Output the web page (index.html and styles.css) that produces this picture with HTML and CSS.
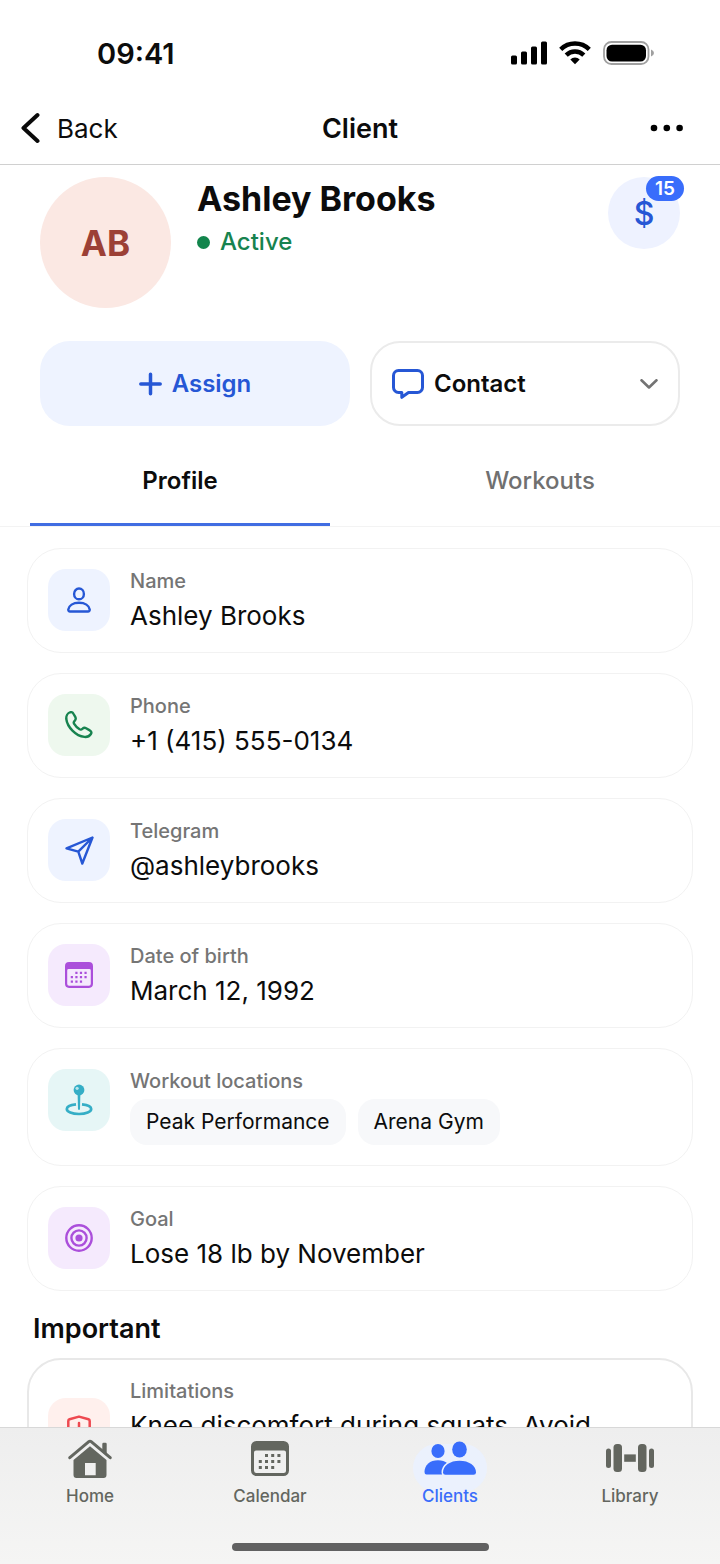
FILE: index.html
```html
<!DOCTYPE html>
<html lang="en">
<head>
    <meta charset="UTF-8">
    <meta name="viewport" content="width=device-width, initial-scale=1.0">
    <title>Client</title>
    <link rel="stylesheet" href="styles.css">
</head>
<body>
<svg class="sprite" aria-hidden="true">
  <symbol id="calendar" viewBox="0 0 38 35">
    <path fill-rule="evenodd" d="M5.5 0h27A5.5 5.5 0 0 1 38 5.500v24a5.500 5.500 0 0 1-5.500 5.500h-27A5.500 5.500 0 0 1 0 29.500v-24A5.500 5.500 0 0 1 5.500 0zM5 9.500a2 2 0 0 0-2 2v18A2.500 2.500 0 0 0 5.500 32h27a2.500 2.500 0 0 0 2.500-2.500v-18a2 2 0 0 0-2-2z"/>
    <path d="M14 13h3v3h-3zM20.200 13h3v3h-3zM26.400 13h3v3h-3zM7.800 19h3v3h-3zM14 19h3v3h-3zM20.200 19h3v3h-3zM26.400 19h3v3h-3zM7.800 25h3v3h-3zM14 25h3v3h-3zM20.200 25h3v3h-3z"/>
  </symbol>
</svg>

<div class="status">
  <span class="time">09:41</span>
  <div class="signals">
    <svg width="36" height="24" viewBox="0 0 36 24"><rect y="14.500" width="6" height="9" rx="1.500"/><rect x="10" y="10.500" width="6" height="13" rx="1.500"/><rect x="20" y="5.500" width="6" height="18" rx="1.500"/><rect x="30" y=".5" width="6" height="23" rx="1.500"/></svg>
    <svg width="32" height="24" viewBox="0 0 32 24" fill="none" stroke="#000" stroke-width="4.400"><path d="M1.700 8.300a20.500 20.500 0 0 1 28.600 0"/><path d="M7.200 14.100a12.500 12.500 0 0 1 17.600 0"/><path d="M11.300 18.400a6.700 6.700 0 0 1 9.400 0L16 23.300z" fill="#000" stroke="none"/></svg>
    <svg width="51" height="24" viewBox="0 0 51 24"><rect x="1" y="1" width="44.500" height="22" rx="7.500" fill="none" stroke="#a0a0a0" stroke-width="1.800"/><rect x="3.500" y="3.700" width="39.500" height="16.800" rx="5.500"/><path d="M48 8.500q3 1.200 3 3.500t-3 3.500z" fill="#a0a0a0"/></svg>
  </div>
</div>

<header class="topbar">
  <a class="back" href="#">
    <svg width="20" height="32" viewBox="0 0 20 32" fill="none" stroke="#0a0a0a" stroke-width="4" stroke-linecap="round" stroke-linejoin="round"><path d="M16.500 3 2.500 16l14 13"/></svg>
    Back
  </a>
  <h1>Client</h1>
  <button class="more" type="button" aria-label="More">
    <svg width="34" height="8" viewBox="0 0 34 8"><circle cx="4" cy="4" r="3.300"/><circle cx="16.800" cy="4" r="3.300"/><circle cx="29.600" cy="4" r="3.300"/></svg>
  </button>
</header>

<main>
  <section class="client">
    <div class="avatar">AB</div>
    <div class="who">
      <h2>Ashley Brooks</h2>
      <p class="state">Active</p>
    </div>
    <button class="money" type="button" aria-label="Payments">$<span class="badge">15</span></button>
  </section>

  <div class="actions">
    <button class="assign" type="button">
      <svg width="23" height="24" viewBox="0 0 23 24" fill="none" stroke="currentColor" stroke-width="3.500" stroke-linecap="round"><path d="M11.500 2.200v19.600M1.800 12h19.400"/></svg>
      Assign
    </button>
    <button class="contact" type="button" aria-haspopup="menu">
      <svg width="32" height="30" viewBox="0 0 32 30" fill="none" stroke="#2657d5" stroke-width="3" stroke-linejoin="round"><path d="M6.500 1.500h19a5 5 0 0 1 5 5v12a5 5 0 0 1-5 5H16.500L9.800 28.300V23.500H6.500a5 5 0 0 1-5-5v-12a5 5 0 0 1 5-5z"/></svg>
      Contact
      <svg class="chevron" width="18" height="10" viewBox="0 0 18 10" fill="none" stroke="#737373" stroke-width="2.600" stroke-linecap="round" stroke-linejoin="round"><path d="M1.500 1.300 9 8.500l7.500-7.200"/></svg>
    </button>
  </div>

  <div class="tabs" role="tablist">
    <button class="tab active" type="button" role="tab" aria-selected="true">Profile</button>
    <button class="tab" type="button" role="tab" aria-selected="false">Workouts</button>
  </div>

  <div class="cards">
    <div class="card">
      <div class="tile blue">
        <svg width="24" height="26" viewBox="0 0 24 26" fill="none" stroke="currentColor" stroke-width="2.400"><ellipse cx="12" cy="6.900" rx="4.900" ry="5.400"/><path d="M1.300 22.500C1.800 18.500 6 15.800 12 15.800s10.200 2.700 10.700 6.700c.1 1.300-.6 2-1.700 2H3c-1.100 0-1.800-.7-1.700-2z"/></svg>
      </div>
      <div class="info"><h3>Name</h3><p>Ashley Brooks</p></div>
    </div>

    <div class="card">
      <div class="tile green">
        <svg width="28" height="28" viewBox="0 0 28 28" fill="none" stroke="currentColor" stroke-width="2.400" stroke-linejoin="round"><path d="M5.500 1.200C7 .9 8 1.800 8.600 3l1.800 3.200c.7 1.400.3 2.400-.6 3.400-1 1-1.500 1.800-.8 3 1.500 2.500 3.200 4.200 5.600 5.700 1.200.7 2 .3 3-.6 1-1 2.200-1.200 3.500-.5l3.700 2.200c1.600 1 2 2.300 1.100 3.600-1.300 2-3.700 3.200-6.500 2.900C10.700 25 2.300 16 1.300 8 1 5 2.500 2 5.500 1.200z"/></svg>
      </div>
      <div class="info"><h3>Phone</h3><p>+1 (415) 555-0134</p></div>
    </div>

    <div class="card">
      <div class="tile blue">
        <svg width="29" height="29" viewBox="0 0 29 29" fill="none" stroke="currentColor" stroke-width="2.400" stroke-linejoin="round"><path d="M27.500 1.500 1.500 12.300 13.300 15.700 17.300 27.500zM13.300 15.700 27.500 1.500"/></svg>
      </div>
      <div class="info"><h3>Telegram</h3><p>@ashleybrooks</p></div>
    </div>

    <div class="card">
      <div class="tile purple">
        <svg width="28" height="26" fill="currentColor"><use href="#calendar"/></svg>
      </div>
      <div class="info"><h3>Date of birth</h3><p>March 12, 1992</p></div>
    </div>

    <div class="card">
      <div class="tile teal">
        <svg width="28" height="32" viewBox="0 0 28 32"><path d="M11 20.300C5 20.900 1.800 22.800 1.800 25c0 2.900 5.200 5 12.200 5s12.200-2.100 12.200-5c0-2.200-3.200-4.100-9.200-4.700" fill="none" stroke="currentColor" stroke-width="2.700"/><path d="M12.600 9h2.800L15 25.200q-1 1.600-2 0z" fill="currentColor"/><circle cx="14" cy="6" r="5.400" fill="currentColor"/><circle cx="12.100" cy="4.300" r="1.600" fill="#b9e6ec"/></svg>
      </div>
      <div class="info">
        <h3>Workout locations</h3>
        <div class="chips"><span class="chip">Peak Performance</span><span class="chip">Arena Gym</span></div>
      </div>
    </div>

    <div class="card">
      <div class="tile purple">
        <svg width="28" height="28" viewBox="0 0 28 28" fill="none" stroke="currentColor" stroke-width="2.400"><circle cx="14" cy="14" r="12.700"/><circle cx="14" cy="14" r="7.600"/><circle cx="14" cy="14" r="3.600" fill="currentColor" stroke="none"/></svg>
      </div>
      <div class="info"><h3>Goal</h3><p>Lose 18 lb by November</p></div>
    </div>

    <h2 class="section-title">Important</h2>

    <div class="card important">
      <div class="tile red">
        <svg width="24" height="28" viewBox="0 0 24 28" fill="none" stroke="currentColor" stroke-width="2.500" stroke-linecap="round" stroke-linejoin="round"><path d="M12 1.600 21.500 4.300q1.200.4 1.200 1.700v8.500c0 6-4.700 9.300-10.700 12C6 23.800 1.300 20.500 1.300 14.500V6q0-1.300 1.200-1.700z"/><path d="M12 8v7M12 19.300v.2"/></svg>
      </div>
      <div class="info"><h3>Limitations</h3><p>Knee discomfort during squats. Avoid</p></div>
    </div>
  </div>
</main>

<nav class="tabbar">
  <div class="links">
    <a href="#">
      <span class="icon"><svg width="44" height="40" viewBox="0 0 44 40"><path d="M34.300 14V6q0-1.200 1.200-1.200h2q1.200 0 1.200 1.200v12z" fill="currentColor"/><path d="M1.800 19.700 20.800 3.700q1.200-1 2.400 0L42.200 19.700" fill="none" stroke="currentColor" stroke-width="3" stroke-linecap="round"/><path fill-rule="evenodd" d="M22 8.200 38.500 22v15a3 3 0 0 1-3 3h-27a3 3 0 0 1-3-3V22zM17 25v12.300h10.700V25z" fill="currentColor"/></svg></span>
      Home
    </a>
    <a href="#">
      <span class="icon"><svg width="38" height="35" fill="currentColor"><use href="#calendar"/></svg></span>
      Calendar
    </a>
    <a class="current" href="#">
      <span class="icon"><svg width="52" height="36" viewBox="0 0 52 36" fill="currentColor"><ellipse cx="14" cy="11" rx="6.600" ry="7"/><path d="M.5 32c0-7 5.500-11.700 13.500-11.700 4 0 7 1 9.500 3V34.500H2.500Q.5 34.500.5 32z"/><ellipse cx="35.500" cy="9.500" rx="7.300" ry="8"/><path d="M19 32.500c0-7 7-11.800 16.500-11.800S52 25.500 52 32.500q0 2.300-2.500 2.300h-28q-2.500 0-2.500-2.300z" stroke="#ebf1fd" stroke-width="3" paint-order="stroke"/></svg></span>
      Clients
    </a>
    <a href="#">
      <span class="icon"><svg width="48" height="28" viewBox="0 0 48 28" fill="currentColor"><rect y="4.500" width="5" height="19.500" rx="2.500"/><rect x="7.500" width="8.500" height="28" rx="3.500"/><rect x="18.200" y="10.400" width="11.600" height="7.400"/><rect x="32" width="8.500" height="28" rx="3.500"/><rect x="43" y="4.500" width="5" height="19.500" rx="2.500"/></svg></span>
      Library
    </a>
  </div>
  <div class="indicator"></div>
</nav>
</body>
</html>
```

FILE: styles.css
```css
* {
  box-sizing: border-box;
}

body {
  margin: 0;
  height: 100vh;
  display: flex;
  flex-direction: column;
  background: #fff;
  color: #0c0c0c;
  font-family: Inter, "Liberation Sans", sans-serif;
}

h1, h2, h3, p {
  margin: 0;
}

a {
  color: inherit;
  text-decoration: none;
}

button {
  border: 0;
  padding: 0;
  background: none;
  color: inherit;
  font-family: inherit;
  cursor: pointer;
}

svg {
  display: block;
  flex: none;
}

.sprite {
  position: absolute;
  width: 0;
  height: 0;
}

/* status bar */
.status {
  display: flex;
  justify-content: space-between;
  align-items: center;
  height: 92px;
  flex: none;
  padding: 14px 66px 0 97px;
}

.time {
  font-size: 29px;
  font-weight: 600;
}

.signals {
  display: flex;
  gap: 12px;
}

/* top bar */
.topbar {
  display: grid;
  grid-template-columns: 1fr auto 1fr;
  align-items: center;
  height: 73px;
  flex: none;
  padding: 0 21px;
  border-bottom: 1px solid #d0d0d0;
}

.back {
  display: flex;
  align-items: center;
  gap: 16px;
  font-size: 26px;
}

.topbar h1 {
  font-size: 27px;
  font-weight: 600;
}

.more {
  justify-self: end;
  padding: 0 15px;
}

/* scrolling part */
main {
  flex: 1;
  min-height: 0;
  overflow-y: auto;
  scrollbar-width: none;
}

.client {
  display: flex;
  align-items: flex-start;
  gap: 26px;
  padding: 12px 40px 0;
}

.avatar {
  display: flex;
  align-items: center;
  justify-content: center;
  width: 131px;
  height: 131px;
  flex: none;
  border-radius: 50%;
  background: #fbe8e3;
  color: #9c4036;
  font-size: 35px;
  font-weight: 700;
}

.who {
  flex: 1;
}

.who h2 {
  font-size: 34px;
  font-weight: 700;
  line-height: 44px;
}

.state {
  display: flex;
  align-items: center;
  gap: 10px;
  color: #17834f;
  font-size: 24px;
  font-weight: 500;
  line-height: 42px;
}

.state::before {
  content: "";
  width: 13px;
  height: 13px;
  border-radius: 50%;
  background: #12854c;
}

.money {
  position: relative;
  width: 72px;
  height: 72px;
  border-radius: 50%;
  background: #eef2ff;
  color: #2657d5;
  font-size: 32px;
  font-weight: 500;
}

.badge {
  position: absolute;
  top: -1px;
  right: -4px;
  width: 38px;
  border-radius: 13px;
  background: #396dfb;
  color: #fff;
  font-size: 19px;
  font-weight: 600;
  line-height: 25px;
}

.actions {
  display: grid;
  grid-template-columns: 1fr 1fr;
  gap: 20px;
  padding: 33px 40px 0;
}

.actions button {
  display: flex;
  align-items: center;
  gap: 10px;
  height: 85px;
  border-radius: 30px;
  font-size: 24px;
  font-weight: 600;
}

.assign {
  justify-content: center;
  background: #eef3ff;
  color: #2657d5;
}

.contact {
  padding: 0 20px;
  border: 2px solid #ebebeb;
}

.chevron {
  margin-left: auto;
}

.tabs {
  display: flex;
  gap: 60px;
  height: 89px;
  margin-top: 12px;
  padding: 0 30px;
  border-bottom: 1px solid #f3f3f3;
}

.tab {
  flex: 1;
  border-bottom: 3px solid transparent;
  color: #707070;
  font-size: 24px;
  font-weight: 500;
}

.tab.active {
  border-bottom-color: #416de2;
  color: #0c0c0c;
  font-weight: 600;
}

/* profile cards */
.cards {
  display: flex;
  flex-direction: column;
  gap: 20px;
  padding: 21px 27px;
}

.card {
  display: flex;
  gap: 20px;
  padding: 20px;
  border: 1px solid #f2f2f2;
  border-radius: 34px;
}

.tile {
  display: flex;
  align-items: center;
  justify-content: center;
  width: 62px;
  height: 62px;
  flex: none;
  border-radius: 18px;
}

.blue {
  background: #eef3ff;
  color: #2657d5;
}

.green {
  background: #eef8ee;
  color: #17834f;
}

.purple {
  background: #f5eafd;
  color: #ab4fdb;
}

.teal {
  background: #e6f6f6;
  color: #35aec6;
}

.red {
  background: #fff0ed;
  color: #ee4950;
}

.info {
  display: flex;
  flex-direction: column;
  gap: 6px;
}

.info h3 {
  color: #757575;
  font-size: 20px;
  font-weight: 500;
  line-height: 24px;
}

.info p {
  font-size: 26px;
  line-height: 33px;
}

.chips {
  display: flex;
  gap: 12px;
}

.chip {
  padding: 0 16px;
  border-radius: 17px;
  background: #f7f8fa;
  font-size: 21px;
  line-height: 46px;
}

.section-title {
  margin: 0 6px -9px;
  font-size: 27px;
  font-weight: 600;
  line-height: 36px;
}

.important {
  min-height: 142px;
  border: 2px solid #e8e8e8;
  padding: 19px;
}

.important .tile {
  align-self: center;
}

/* bottom navigation */
.tabbar {
  flex: none;
  padding: 10px 0 13px;
  border-top: 1px solid #d8d8d8;
  background: linear-gradient(#eeeeee, #f5f5f4);
}

.links {
  display: grid;
  grid-template-columns: repeat(4, 1fr);
  color: #63665f;
  font-size: 17px;
  font-weight: 500;
  line-height: 20px;
  text-align: center;
}

.links a {
  position: relative;
  z-index: 0;
}

.icon {
  display: flex;
  align-items: center;
  justify-content: center;
  height: 40px;
  margin-bottom: 8px;
}

.current {
  color: #396dfb;
}

/* halo behind the current icon */
.current::before {
  content: "";
  position: absolute;
  z-index: -1;
  top: 6px;
  left: 50%;
  width: 74px;
  height: 48px;
  margin-left: -37px;
  border-radius: 28px;
  background: #ebf1fd;
}

.indicator {
  width: 257px;
  height: 8px;
  margin: 37px auto 0;
  border-radius: 4px;
  background: #616161;
}
```
